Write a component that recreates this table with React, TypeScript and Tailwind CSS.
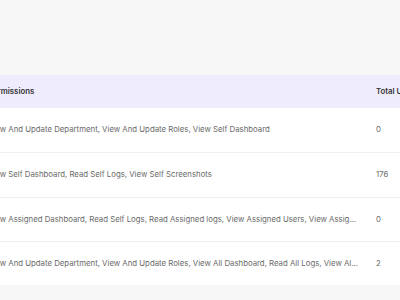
import React from "react";

const rows = [
  { p: "View And Update Department, View And Update Roles, View Self Dashboard", t: "0", h: "h-[45px]" },
  { p: "View Self Dashboard, Read Self Logs, View Self Screenshots", t: "176", h: "h-[45px]" },
  { p: "View Assigned Dashboard, Read Self Logs, Read Assigned logs, View Assigned Users, View Assigned Screenshots", t: "0", h: "h-[44px]" },
  { p: "View And Update Department, View And Update Roles, View All Dashboard, Read All Logs, View All Screenshots", t: "2", h: "h-[43px]" },
];

export default function App() {
  return (
    <div
      className="w-[400px] h-[300px] overflow-hidden bg-[#f7f7f7] flex flex-col"
      style={{ fontFamily: "Inter, 'Noto Sans', sans-serif" }}
    >
      <div className="h-[75px] shrink-0" />
      <div className="flex flex-col bg-white overflow-hidden">
        <div className="h-[33px] bg-[#efecfd] flex items-center text-[7.8px] font-semibold text-[#333333]">
          <div className="ml-[-12px] w-[370px] shrink-0 truncate">Permissions</div>
          <div className="ml-[18px] whitespace-nowrap">Total Users</div>
        </div>
        {rows.map((r, i) => (
          <div
            key={i}
            className={`${r.h} flex items-center ${i < 3 ? "border-b border-[#f0f0f0]" : ""} text-[7.8px] text-[#6b6b6b]`}
          >
            <div className="ml-[-12px] w-[370px] shrink-0 truncate">{r.p}</div>
            <div className="ml-[18px] whitespace-nowrap">{r.t}</div>
          </div>
        ))}
      </div>
    </div>
  );
}
